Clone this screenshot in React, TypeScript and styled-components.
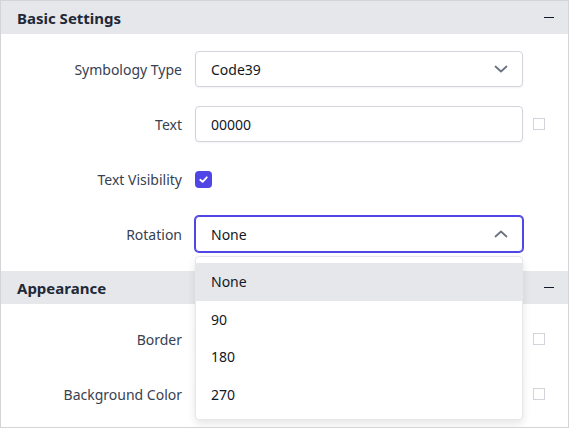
import React from "react";
import styled, { createGlobalStyle } from "styled-components";

const GlobalStyle = createGlobalStyle`
  body {
    margin: 0;
    background: #ffffff;
    font-family: "Noto Sans", "Open Sans", sans-serif;
  }
`;

const Panel = styled.div`
  width: 569px;
  height: 428px;
  box-sizing: border-box;
  border: 1px solid #d4d4d8;
  background: #ffffff;
  overflow: hidden;
`;

const SectionHeader = styled.div`
  height: 33px;
  display: flex;
  align-items: center;
  justify-content: space-between;
  padding: 0 14px 0 16px;
  background: #e5e7eb;
  color: #1f2937;
  font-size: 15px;
  font-weight: 700;
`;

const Minus = styled.span`
  width: 10px;
  height: 1.5px;
  background: #111827;
`;

const SectionBody = styled.div`
  display: flex;
  flex-direction: column;
  gap: 19px;
  padding: 17px 0 19px;
`;

const Row = styled.div`
  display: flex;
  align-items: center;
  height: 36px;
`;

const Label = styled.label`
  width: 181px;
  margin-right: 13px;
  text-align: right;
  font-size: 14px;
  color: #374151;
`;

const Field = styled.div<{ $focused?: boolean }>`
  position: relative;
  width: 328px;
  height: 36px;
  box-sizing: border-box;
  display: flex;
  align-items: center;
  justify-content: space-between;
  padding: 0 14px 0 15px;
  border: 1px solid ${(p) => (p.$focused ? "#4f46e5" : "#d1d5db")};
  box-shadow: ${(p) =>
    p.$focused ? "0 0 0 1px #4f46e5" : "0 1px 2px rgba(0,0,0,0.05)"};
  border-radius: 4px;
  font-size: 14px;
  color: #111827;
  background: #ffffff;
`;

const Chevron = styled.svg`
  width: 14px;
  height: 14px;
  color: #6b7280;
`;

const SideBox = styled.span<{ $hidden?: boolean }>`
  width: 12px;
  height: 12px;
  margin-left: 10px;
  box-sizing: border-box;
  border: 1px solid #d1d5db;
  visibility: ${(p) => (p.$hidden ? "hidden" : "visible")};
`;

const Checkbox = styled.span`
  width: 17px;
  height: 17px;
  border-radius: 4px;
  background: #4f46e5;
  display: flex;
  align-items: center;
  justify-content: center;
`;

const Menu = styled.ul`
  position: absolute;
  top: calc(100% + 5px);
  left: -1px;
  right: -1px;
  margin: 0;
  padding: 6px 0;
  list-style: none;
  background: #ffffff;
  border: 1px solid #e5e7eb;
  border-radius: 4px;
  box-shadow: 0 4px 8px rgba(0, 0, 0, 0.1);
  z-index: 10;
`;

const Option = styled.li<{ $active?: boolean }>`
  height: 37.5px;
  display: flex;
  align-items: center;
  padding-left: 15px;
  font-size: 14px;
  color: #111827;
  background: ${(p) => (p.$active ? "#e5e7eb" : "transparent")};
`;

const ChevronIcon = ({ up }: { up?: boolean }) => (
  <Chevron viewBox="0 0 14 14" fill="none">
    <path
      d={up ? "M1.5 9.5L7 4.5L12.5 9.5" : "M1.5 4.5L7 9.5L12.5 4.5"}
      stroke="currentColor"
      strokeWidth="1.8"
      strokeLinecap="round"
      strokeLinejoin="round"
    />
  </Chevron>
);

const rotations = ["None", "90", "180", "270"];

export default function App() {
  return (
    <>
      <GlobalStyle />
      <Panel>
        <SectionHeader>
          <span>Basic Settings</span>
          <Minus />
        </SectionHeader>
        <SectionBody>
          <Row>
            <Label>Symbology Type</Label>
            <Field>
              <span>Code39</span>
              <ChevronIcon />
            </Field>
            <SideBox $hidden />
          </Row>
          <Row>
            <Label>Text</Label>
            <Field>
              <span>00000</span>
            </Field>
            <SideBox />
          </Row>
          <Row>
            <Label>Text Visibility</Label>
            <Checkbox>
              <svg width="11" height="11" viewBox="0 0 12 12" fill="none">
                <path
                  d="M2.5 6.3L5 8.6L9.6 3.6"
                  stroke="#ffffff"
                  strokeWidth="2"
                  strokeLinecap="round"
                  strokeLinejoin="round"
                />
              </svg>
            </Checkbox>
          </Row>
          <Row>
            <Label>Rotation</Label>
            <Field $focused>
              <span>None</span>
              <ChevronIcon up />
              <Menu>
                {rotations.map((r, i) => (
                  <Option key={r} $active={i === 0}>
                    {r}
                  </Option>
                ))}
              </Menu>
            </Field>
          </Row>
        </SectionBody>
        <SectionHeader>
          <span>Appearance</span>
          <Minus />
        </SectionHeader>
        <SectionBody>
          <Row>
            <Label>Border</Label>
            <Field />
            <SideBox />
          </Row>
          <Row>
            <Label>Background Color</Label>
            <Field />
            <SideBox />
          </Row>
        </SectionBody>
      </Panel>
    </>
  );
}
